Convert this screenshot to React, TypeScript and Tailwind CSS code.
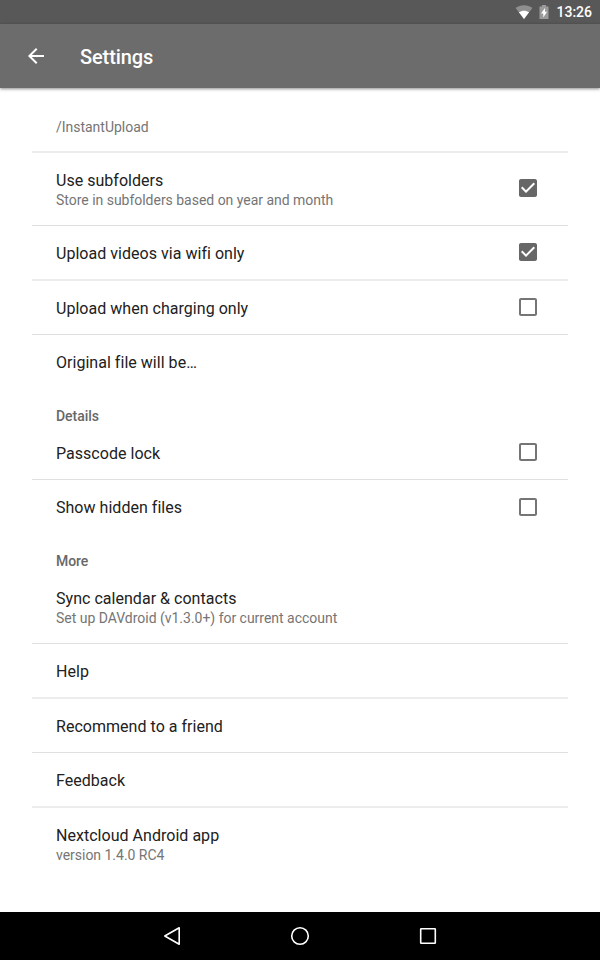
import React from "react";

type CheckProps = { on: boolean; className: string };

function Check({ on, className }: CheckProps) {
  return (
    <svg width="24" height="24" viewBox="0 0 24 24" className={`shrink-0 ${className}`}>
      {on ? (
        <path
          fill="#676767"
          d="M19 3H5c-1.110 0-2 .9-2 2v14c0 1.100.89 2 2 2h14c1.110 0 2-.9 2-2V5c0-1.100-.89-2-2-2zM10 17l-5-5 1.410-1.410L10 14.170l7.590-7.590L19 8l-9 9z"
        />
      ) : (
        <path fill="#757575" d="M19 5v14H5V5h14m0-2H5c-1.100 0-2 .9-2 2v14c0 1.100.9 2 2 2h14c1.100 0 2-.9 2-2V5c0-1.100-.9-2-2-2z" />
      )}
    </svg>
  );
}

type RowProps = {
  title?: string;
  sub?: string;
  checked?: boolean;
  box: string;
  text?: string;
  check?: string;
  line?: "thin" | "soft";
};

function Row({ title, sub, checked, box, text = "pt-0.5", check = "mb-0.5", line }: RowProps) {
  return (
    <div className={`flex flex-col ${box}`}>
      <div className="flex min-h-0 flex-1 items-center justify-between pl-6 pr-7">
        <div className={`flex flex-col whitespace-nowrap ${text}`}>
          {title && <div className="text-[16px] leading-[21px] tracking-[0.03px] text-[#212121]">{title}</div>}
          {sub && <div className="text-[14px] leading-[19px] tracking-[-0.02px] text-[#757575]">{sub}</div>}
        </div>
        {checked !== undefined && <Check on={checked} className={check} />}
      </div>
      {line === "thin" && <div className="h-px bg-[#e0e0e0]" />}
      {line === "soft" && <div className="h-0.5 bg-[#ececec]" />}
    </div>
  );
}

function Heading({ text, box }: { text: string; box: string }) {
  return (
    <div className={`pl-6 text-[14px] font-medium leading-[18px] tracking-[-0.05px] text-[#676767] ${box}`}>{text}</div>
  );
}

export default function App() {
  return (
    <div className="flex h-[960px] w-[600px] flex-col overflow-hidden bg-white font-['Roboto',sans-serif]">
      <div className="flex h-6 shrink-0 items-center justify-end bg-[#585858] pr-2">
        <svg width="18" height="16" viewBox="0 0 18 16">
          <path d="M9 15L.6 4C5.500.2 12.500.2 17.400 4Z" fill="#8f8f8f" />
          <path d="M9 15L3.900 8.300C6.800 6.100 11.200 6.100 14.100 8.300Z" fill="#fff" />
        </svg>
        <svg className="ml-1.5 mr-[7px]" width="10" height="16" viewBox="0 0 10 16">
          <path d="M3 1h4v1.500h2.500V15h-9V2.500H3Z" fill="#9b9b9b" />
          <path d="M6 4L2 9.500h2.300V13.500L8 7.800H6Z" fill="#fff" />
        </svg>
        <span className="pt-px text-[14px] font-medium leading-[23px] text-white">13:26</span>
      </div>
      <header className="relative z-10 flex h-16 shrink-0 items-center bg-[#6c6c6c] pl-6 shadow-[0_1px_3px_rgba(0,0,0,0.45)]">
        <svg width="24" height="24" viewBox="0 0 24 24">
          <path fill="#fff" d="M20 11H7.830l5.590-5.590L12 4l-8 8 8 8 1.410-1.410L7.830 13H20v-2z" />
        </svg>
        <h1 className="ml-8 pt-0.5 text-[20px] font-medium leading-6 tracking-[-0.1px] text-white">Settings</h1>
      </header>
      <main className="flex flex-1 flex-col px-8 pt-[14px]">
        <Row box="h-[51px]" sub="/InstantUpload" line="soft" />
        <Row box="h-[73px]" title="Use subfolders" sub="Store in subfolders based on year and month" checked line="thin" />
        <Row box="h-[55px]" title="Upload videos via wifi only" checked line="soft" />
        <Row box="h-[54px]" title="Upload when charging only" checked={false} line="thin" />
        <Row box="h-[55px]" title="Original file will be…" text="pt-0" />
        <Heading box="h-[35px] pt-[17px]" text="Details" />
        <Row box="h-[55px]" title="Passcode lock" checked={false} check="mb-0" line="thin" />
        <Row box="h-[55px]" title="Show hidden files" text="pt-0" checked={false} />
        <Heading box="h-[35px] pt-[17px]" text="More" />
        <Row box="h-[74px]" title="Sync calendar & contacts" sub="Set up DAVdroid (v1.3.0+) for current account" line="thin" />
        <Row box="h-[55px]" title="Help" line="soft" />
        <Row box="h-[54px]" title="Recommend to a friend" line="thin" />
        <Row box="h-[55px]" title="Feedback" line="soft" />
        <Row box="h-[74px]" title="Nextcloud Android app" sub="version 1.4.0 RC4" text="pt-0" />
      </main>
      <nav className="flex h-12 shrink-0 items-center justify-center gap-[104px] bg-black">
        <svg width="24" height="24" viewBox="0 0 24 24" fill="none" stroke="#fff" strokeWidth="1.6" strokeLinejoin="round">
          <path d="M19.200 3.800v16.400L4.800 12Z" />
        </svg>
        <svg width="24" height="24" viewBox="0 0 24 24" fill="none" stroke="#fff" strokeWidth="1.6">
          <circle cx="12" cy="12" r="8.300" />
        </svg>
        <svg width="24" height="24" viewBox="0 0 24 24" fill="none" stroke="#fff" strokeWidth="1.6" strokeLinejoin="round">
          <rect x="4.700" y="4.700" width="14.600" height="14.600" rx="0.500" />
        </svg>
      </nav>
    </div>
  );
}
